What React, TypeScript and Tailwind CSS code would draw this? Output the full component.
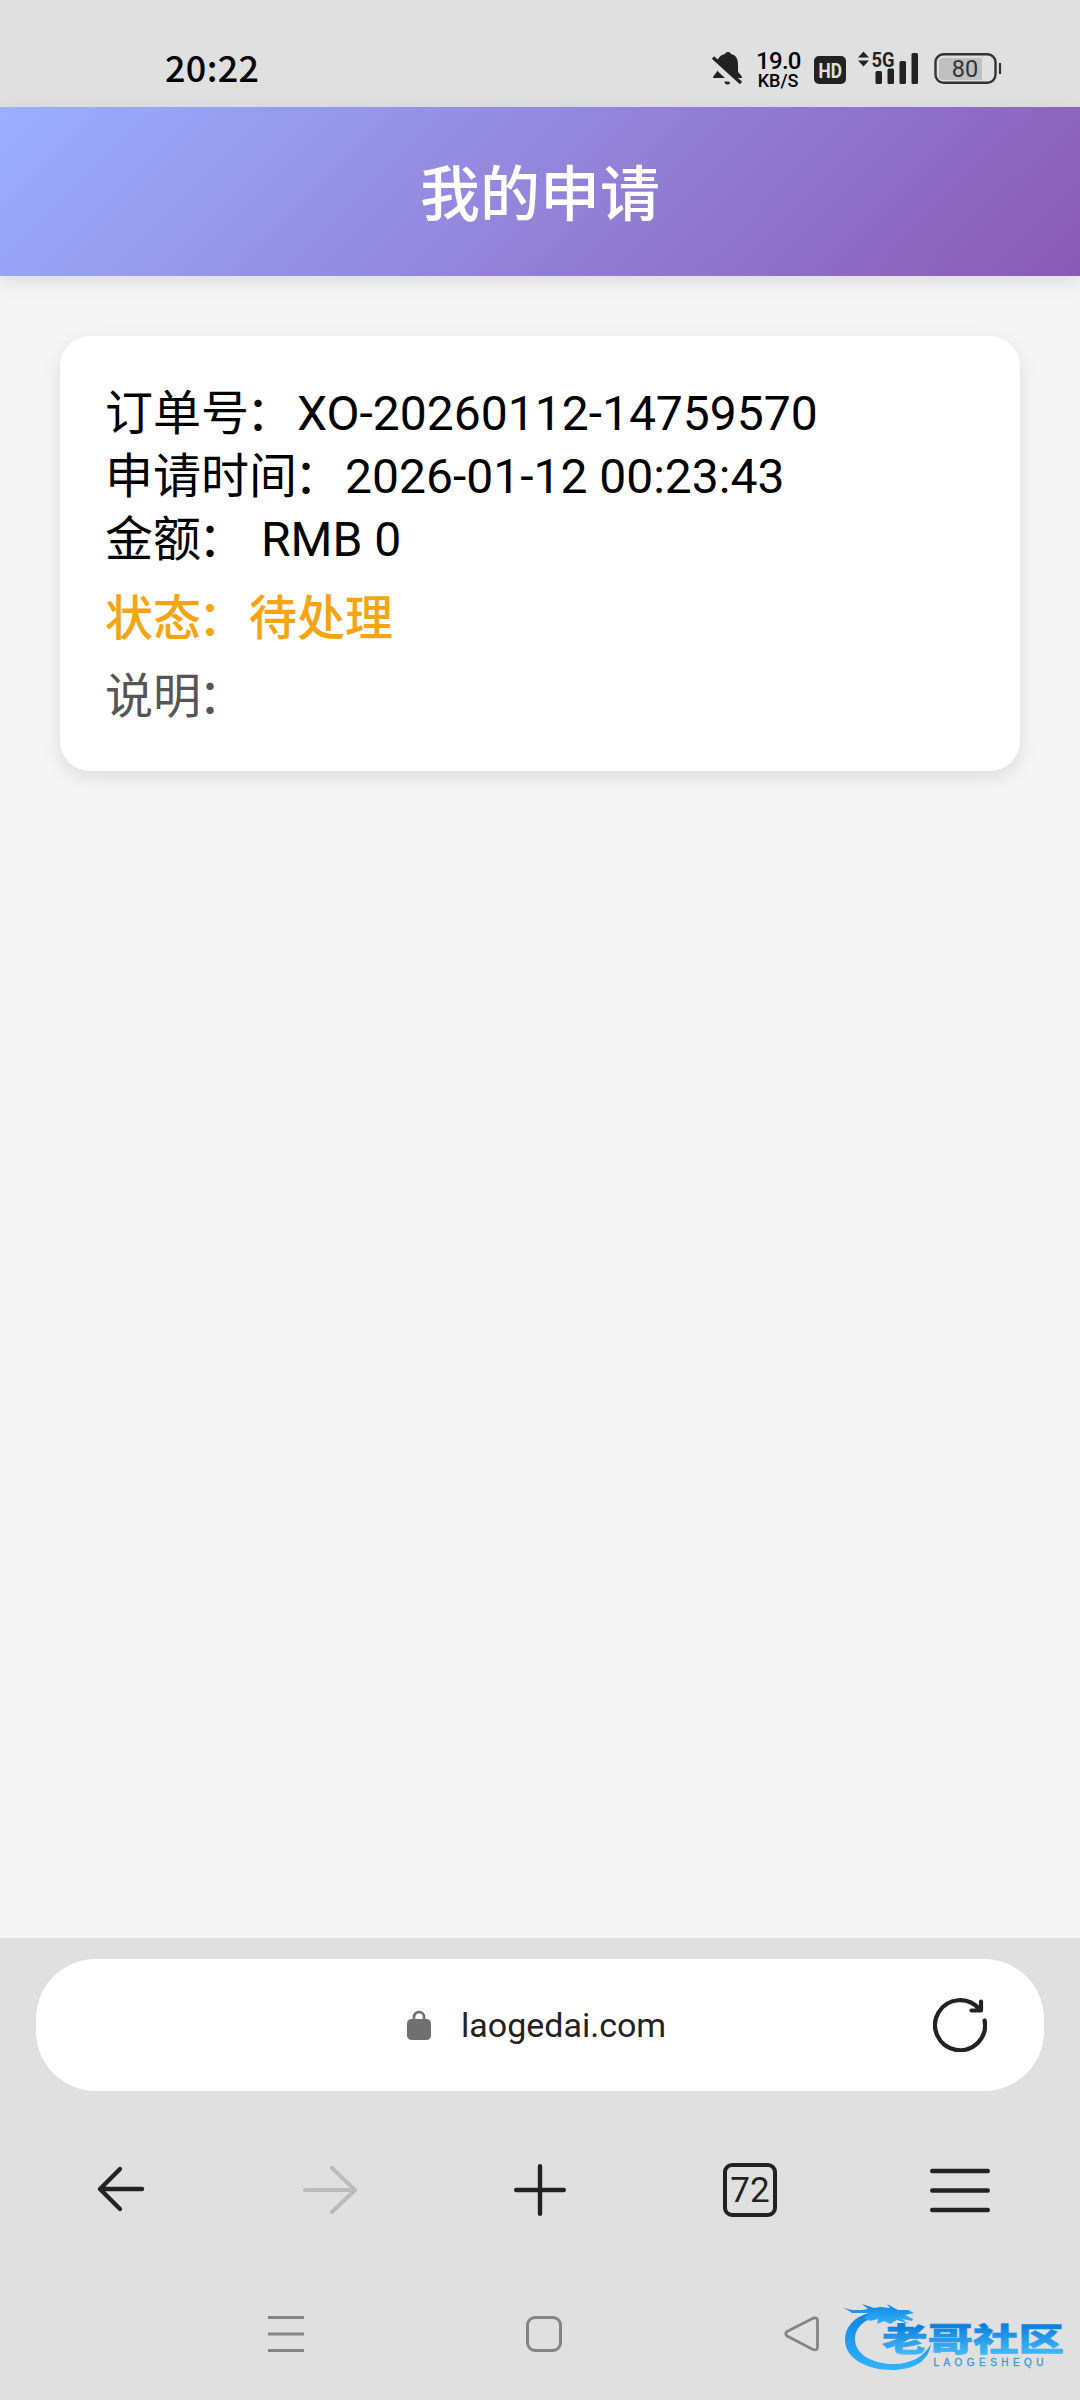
import React from 'react';

const StatusBar: React.FC = () => (
    <div className="flex h-[107px] items-start bg-[#e0e0e0] pl-[165px] pt-[51px] text-black">
        <span className="-mt-[5px] w-[546px] text-[36px] leading-[40px] tracking-[0.3px] font-medium font-['Noto_Sans_CJK_SC',sans-serif]">20:22</span>

        {/* Muted bell */}
        <svg className="h-[36px] w-[32px] shrink-0" viewBox="0 0 32 36" fill="#222">
            <path d="M17 1a3 3 0 0 1 3 2c5 1 7 5 7 10v7c0 2 4 4 4 7H2c0-3 4-5 4-7v-7C6 8 9 4 14 3a3 3 0 0 1 3-2zM13.500 30.500h6a3 3 0 0 1-6 0z" />
            <path d="M0.500 9L28.500 35" stroke="#e0e0e0" strokeWidth="8" />
            <path d="M2 6.500L30 32" stroke="#222" strokeWidth="3.400" />
        </svg>

        {/* Network speed */}
        <div className="ml-[13px] w-[44px] text-center font-['Roboto',sans-serif] font-medium">
            <div className="text-[24px] leading-[20px] tracking-[-0.7px]">19.0</div>
            <div className="text-[18px] leading-[19px]">KB/S</div>
        </div>

        <svg className="ml-[14px] mt-[5px] h-[28px] w-[32px] shrink-0" viewBox="0 0 32 28">
            <rect width="32" height="28" rx="5" fill="#222" />
            <text x="4.500" y="21.500" fontSize="21" fontWeight="700" fontFamily="Roboto" fill="#e0e0e0" textLength="23.500" lengthAdjust="spacingAndGlyphs">HD</text>
        </svg>

        {/* Signal */}
        <svg className="ml-[12px] h-[34px] w-[62px] shrink-0 overflow-visible" viewBox="0 0 62 34" fill="#222">
            <path d="M0 6.500L5.500 0.500L11 6.500zM0 9.500L5.500 15.500L11 9.500z" />
            <text x="13.500" y="16" fontSize="21" fontWeight="700" fontFamily="Roboto" textLength="23" lengthAdjust="spacingAndGlyphs">5G</text>
            <rect x="17.500" y="20" width="6.500" height="13" rx="1.500" />
            <rect x="29.500" y="17.500" width="6.500" height="15.500" rx="1.500" />
            <rect x="41.500" y="10" width="6.500" height="23" rx="1.500" />
            <rect x="53.500" y="2" width="6.500" height="31" rx="1.500" />
        </svg>

        {/* Battery */}
        <svg className="ml-[14px] h-[34px] w-[68px] shrink-0" viewBox="0 0 68 34" fill="none">
            <rect x="1.500" y="3.200" width="60" height="28.600" rx="8" stroke="#333" strokeWidth="2.400" />
            <path d="M9 7h39v22H9a4 4 0 0 1-4-4V11a4 4 0 0 1 4-4z" fill="#c0c0c0" />
            <path d="M66 12v11" stroke="#333" strokeWidth="2.200" />
            <text x="31" y="25.800" textAnchor="middle" fontSize="23.500" fontFamily="Roboto" fill="#333">80</text>
        </svg>
    </div>
);

const ReloadIcon: React.FC = () => (
    <svg className="h-[54px] w-[54px]" viewBox="0 0 54 54" fill="none" stroke="#222" strokeWidth="4.200" strokeLinecap="round">
        <path d="M51.600 22.500A25 25 0 1 1 46.500 11.500" />
        <path d="M48 3.500v9H38.500" strokeLinejoin="round" />
    </svg>
);

const CommunityLogo: React.FC = () => (
    <svg className="h-[76px] w-[223px] overflow-visible" viewBox="0 0 223 76">
        <defs>
            <linearGradient id="logoBlue" x1="0" y1="0" x2="0" y2="1">
                <stop offset="0" stopColor="#0f84e2" />
                <stop offset="1" stopColor="#30b4ff" />
            </linearGradient>
            <linearGradient id="logoText" x1="0" y1="0" x2="0" y2="1">
                <stop offset="0.200" stopColor="#0a7bdc" />
                <stop offset="0.900" stopColor="#45bcfb" />
            </linearGradient>
        </defs>
        <g fill="url(#logoBlue)">
            <path d="M27 13C12 17 3 27 3 40C3 58 24 70 50 70C71 70 87 61 89 44C82 57 68 64 52 64C30 64 13 54 13 39C13 29 20 21 33 17z" />
            <path d="M1 7C8 11 14 10 20 10L26 9L20 4L32 8L38 7L48 8L45 4L56 10L66 10L72 13L63 15L71 19L70 21L60 19L67 24L55 20L48 24L42 21L35 24L36 19L28 21L22 18L28 13L10 13z" />
        </g>
        <text x="40" y="51" fontSize="32" fontWeight="900" fontFamily="Noto Sans CJK SC" fill="url(#logoText)" stroke="url(#logoText)" strokeWidth="0.600" textLength="182" lengthAdjust="spacingAndGlyphs">老哥社区</text>
        <text x="91.500" y="65.500" fontSize="10" fontFamily="Liberation Sans" fill="#3f96d8" stroke="#3f96d8" strokeWidth="0.300" textLength="110">LAOGESHEQU</text>
    </svg>
);

// full-width colon, pulled closer to its label
const Colon: React.FC = () => <span className="-ml-[3px] mr-[3px]">：</span>;

const App: React.FC = () => {
    return (
        <div className="flex h-[2400px] w-[1080px] flex-col overflow-hidden bg-[#f5f5f5] font-['Roboto','Noto_Sans_CJK_SC',sans-serif]">
            <StatusBar />

            {/* Page title */}
            <header className="flex h-[169px] shrink-0 items-center justify-center bg-[linear-gradient(135deg,#9bafff,#895ab5)] pt-[9px] text-[60px] font-medium text-white shadow-[0_6px_18px_rgba(0,0,0,0.1)]">
                <h1>我的申请</h1>
            </header>

            {/* Application card */}
            <main className="flex-1 px-[60px] pt-[60px]">
                <div className="rounded-[30px] bg-white px-[45px] pt-[46px] pb-[43px] text-[48px] leading-[63px] text-black shadow-[0_6px_18px_rgba(0,0,0,0.1)]">
                    <div>订单号<Colon />XO-20260112-14759570</div>
                    <div>申请时间<Colon />2026-01-12 00:23:43</div>
                    <div>金额<Colon /> RMB 0</div>
                    <div className="mt-[16px] font-medium text-[#f5a511]">状态<Colon />待处理</div>
                    <div className="mt-[15px] text-[#555]">说明<Colon /></div>
                </div>
            </main>

            {/* Browser toolbar */}
            <footer className="flex h-[462px] shrink-0 flex-col bg-[#e0e0e0] px-[15px] pt-[21px]">
                <div className="mx-[21px] flex h-[132px] items-center rounded-[60px] bg-white">
                    <svg className="ml-[371px] h-[30px] w-[24px]" viewBox="0 0 24 30">
                        <path d="M7 12V7a5 5 0 0 1 10 0V12" fill="none" stroke="#707070" strokeWidth="2.600" />
                        <rect y="9" width="24" height="21" rx="4.500" fill="#707070" />
                    </svg>
                    <span className="ml-[30px] flex-1 text-[34px] text-[#222]">laogedai.com</span>
                    <div className="mr-[57px]">
                        <ReloadIcon />
                    </div>
                </div>

                <div className="mt-[66px] grid h-[66px] grid-cols-5 place-items-center">
                    <svg className="h-[54px] w-[54px]" viewBox="0 0 54 54" fill="none" stroke="#222" strokeWidth="4.400" strokeLinecap="round" strokeLinejoin="round">
                        <path d="M49 26H7M27 6L7 26L27 46" />
                    </svg>
                    <svg className="h-[54px] w-[54px]" viewBox="0 0 54 54" fill="none" stroke="#bbb" strokeWidth="4" strokeLinecap="round" strokeLinejoin="round">
                        <path d="M2 27H52M29 5L52 27L29 49" />
                    </svg>
                    <svg className="h-[54px] w-[54px]" viewBox="0 0 54 54" fill="none" stroke="#222" strokeWidth="4.400" strokeLinecap="round">
                        <path d="M27 3.200V50.800M3.200 27H50.800" />
                    </svg>
                    <div className="flex h-[54px] w-[54px] items-center justify-center rounded-[9px] border-[4px] border-[#222] text-[35px] leading-none text-[#222]">
                        72
                    </div>
                    <svg className="h-[54px] w-[60px]" viewBox="0 0 60 54" fill="none" stroke="#222" strokeWidth="4.400" strokeLinecap="round">
                        <path d="M2.200 8H57.800M2.200 27.500H57.800M2.200 47H57.800" />
                    </svg>
                </div>

                {/* System navigation */}
                <div className="mt-[77px] flex h-[76px] items-start">
                    <svg className="ml-[253px] mt-[16px] h-[36px] w-[36px] shrink-0" viewBox="0 0 36 36" stroke="#848484" strokeWidth="3">
                        <path d="M0 1.500H36M0 18H36M0 34.500H36" />
                    </svg>
                    <div className="ml-[222px] mt-[16px] h-[36px] w-[36px] shrink-0 rounded-[9px] border-[3px] border-[#848484]" />
                    <svg className="ml-[222px] mt-[16px] h-[36px] w-[36px] shrink-0" viewBox="0 0 36 36" fill="none" stroke="#848484" strokeWidth="2.800" strokeLinejoin="round">
                        <path d="M3 15.500L29 2.200Q33.500 1 33.500 5V31Q33.500 35 29 33.500L3 20Q0.500 17.700 3 15.500z" />
                    </svg>
                    <div className="ml-[22px] shrink-0">
                        <CommunityLogo />
                    </div>
                </div>
            </footer>
        </div>
    );
};

export default App;
